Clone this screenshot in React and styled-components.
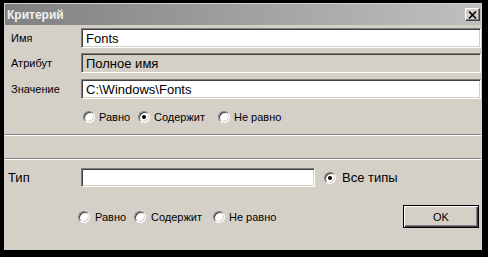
import styled, { createGlobalStyle } from "styled-components";

const GlobalStyle = createGlobalStyle`
  html, body {
    margin: 0;
    padding: 0;
    background: #000;
  }
  body {
    font-family: "Liberation Sans", Arial, sans-serif;
    color: #000;
  }
`;

const Dialog = styled.div`
  box-sizing: border-box;
  margin: 3px 0 0 4px;
  width: 478px;
  height: 247px;
  padding: 1px;
  background: #d4d0c8;
  display: flex;
  flex-direction: column;
`;

const TitleBar = styled.div`
  height: 21px;
  display: flex;
  align-items: center;
  justify-content: space-between;
  padding: 0 1px 0 2px;
  background: linear-gradient(to right, #808080, #c0c0c0);
  color: #f0f0f0;
  font-size: 12px;
  font-weight: bold;
`;

const CloseButton = styled.div`
  box-sizing: border-box;
  width: 15px;
  height: 13px;
  background: #d4d0c8;
  border: 1px solid;
  border-color: #fff #404040 #404040 #fff;
  box-shadow: inset -1px -1px #808080;
  display: flex;
  align-items: center;
  justify-content: center;
`;

const Content = styled.div`
  display: flex;
  flex-direction: column;
  padding-top: 3px;
`;

const FieldRow = styled.div`
  display: flex;
  align-items: center;
  height: ${(p) => p.$h || 20}px;
  margin-top: ${(p) => p.$mt || 0}px;
`;

const Label = styled.div`
  width: ${(p) => p.$w || 76}px;
  padding-left: ${(p) => p.$pl || 6}px;
  box-sizing: border-box;
  font-size: ${(p) => p.$fs || 11}px;
`;

const Input = styled.div`
  box-sizing: border-box;
  height: 100%;
  flex: ${(p) => (p.$w ? "none" : "1")};
  width: ${(p) => (p.$w ? `${p.$w}px` : "auto")};
  background: ${(p) => (p.$disabled ? "#d4d0c8" : "#fff")};
  border: 1px solid;
  border-color: #808080 #fff #fff #808080;
  box-shadow: inset 1px 1px #404040, inset -1px -1px #d4d0c8;
  padding-left: 4px;
  font-size: 13px;
  display: flex;
  align-items: center;
`;

const RadioRow = styled.div`
  display: flex;
  align-items: center;
  height: 13px;
  margin-top: ${(p) => p.$mt || 0}px;
  padding-left: ${(p) => p.$pl}px;
`;

const RadioItem = styled.div`
  display: flex;
  align-items: center;
  gap: ${(p) => p.$gap || 4}px;
  width: ${(p) => (p.$w ? `${p.$w}px` : "auto")};
  font-size: ${(p) => p.$fs || 11}px;
  white-space: nowrap;
`;

const RadioCircle = styled.span`
  box-sizing: border-box;
  position: relative;
  width: 12px;
  height: 12px;
  flex: none;
  border-radius: 50%;
  background: #fff;
  border: 1px solid;
  border-color: #808080 #fff #fff #808080;
  box-shadow: inset 1px 1px #404040, inset -1px -1px #d4d0c8;

  &::after {
    content: "";
    display: ${(p) => (p.$checked ? "block" : "none")};
    position: absolute;
    left: 3px;
    top: 3px;
    width: 4px;
    height: 4px;
    border-radius: 50%;
    background: #000;
  }
`;

const Separator = styled.div`
  height: 1px;
  background: #808080;
  border-bottom: 1px solid #fff;
  margin-top: ${(p) => p.$mt}px;
`;

const BottomRow = styled.div`
  display: flex;
  align-items: center;
  justify-content: space-between;
  height: 23px;
  margin-top: 18px;
  padding-right: 2px;
`;

const OkButton = styled.div`
  box-sizing: border-box;
  width: 76px;
  height: 23px;
  border: 1px solid #000;
  background: #d4d0c8;
  box-shadow: inset 1px 1px #fff, inset -1px -1px #404040, inset -2px -2px #808080;
  font-size: 11px;
  display: flex;
  align-items: center;
  justify-content: center;
`;

const Radio = ({ checked, label, w, gap, fs }) => (
  <RadioItem $w={w} $gap={gap} $fs={fs}>
    <RadioCircle $checked={checked} />
    {label}
  </RadioItem>
);

export default function App() {
  return (
    <>
      <GlobalStyle />
      <Dialog>
        <TitleBar>
          <span>Критерий</span>
          <CloseButton>
            <svg width="9" height="8" viewBox="0 0 9 8">
              <path d="M1 0.5 L8 7.5 M8 0.5 L1 7.5" stroke="#000" strokeWidth="1.6" />
            </svg>
          </CloseButton>
        </TitleBar>
        <Content>
          <FieldRow>
            <Label>Имя</Label>
            <Input>Fonts</Input>
          </FieldRow>
          <FieldRow $mt={5}>
            <Label>Атрибут</Label>
            <Input $disabled>Полное имя</Input>
          </FieldRow>
          <FieldRow $mt={6}>
            <Label>Значение</Label>
            <Input>C:\Windows\Fonts</Input>
          </FieldRow>
          <RadioRow $mt={11} $pl={78}>
            <Radio label="Равно" w={55} />
            <Radio label="Содержит" w={80} checked />
            <Radio label="Не равно" />
          </RadioRow>
          <Separator $mt={11} />
          <Separator $mt={22} />
          <FieldRow $mt={8} $h={19}>
            <Label $pl={3} $fs={13}>Тип</Label>
            <Input $w={234} />
            <RadioItem $gap={6} $fs={13} style={{ marginLeft: 9 }}>
              <RadioCircle $checked />
              Все типы
            </RadioItem>
          </FieldRow>
          <BottomRow>
            <RadioRow $pl={73}>
              <Radio label="Равно" w={56} gap={5} />
              <Radio label="Содержит" w={79} gap={5} />
              <Radio label="Не равно" gap={4} />
            </RadioRow>
            <OkButton>OK</OkButton>
          </BottomRow>
        </Content>
      </Dialog>
    </>
  );
}
